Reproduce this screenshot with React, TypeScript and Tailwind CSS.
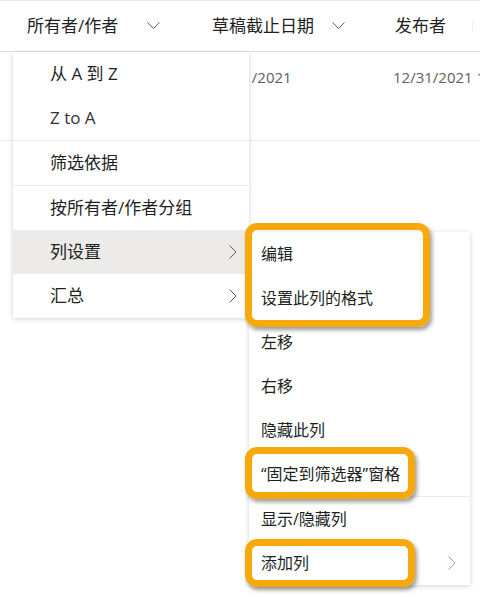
import React from 'react';

const font = "font-['Open_Sans','Noto_Sans_CJK_SC',sans-serif]";

const ChevronDown = () => (
  <svg width="13" height="8" viewBox="0 0 13 8" className="shrink-0">
    <polyline points="0.5,0.5 6.5,6.5 12.5,0.5" fill="none" stroke="#605e5c" strokeWidth="1" />
  </svg>
);

const ChevronRight = ({ color = '#605e5c' }: { color?: string }) => (
  <svg width="8" height="14" viewBox="0 0 8 14" className="shrink-0">
    <polyline points="0.5,0.5 7,7 0.5,13.5" fill="none" stroke={color} strokeWidth="1" />
  </svg>
);

type Item = { label: string; sub?: boolean; active?: boolean; divider?: boolean };

const columnMenu: Item[] = [
  { label: '从 A 到 Z' },
  { label: 'Z to A', divider: true },
  { label: '筛选依据', divider: true },
  { label: '按所有者/作者分组' },
  { label: '列设置', sub: true, active: true },
  { label: '汇总', sub: true },
];

const settingsMenu: Item[] = [
  { label: '编辑' },
  { label: '设置此列的格式' },
  { label: '左移' },
  { label: '右移' },
  { label: '隐藏此列' },
  { label: '“固定到筛选器”窗格', divider: true },
  { label: '显示/隐藏列' },
  { label: '添加列', sub: true },
];

const Callout = ({ className }: { className: string }) => (
  <div
    className={`absolute rounded-[12px] border-[7px] border-[#f7a90b] shadow-[2px_3px_4px_rgba(0,0,0,0.4)] ${className}`}
  />
);

export default function App() {
  return (
    <div className={`relative w-[480px] h-[597px] overflow-hidden bg-white text-[#201f1e] ${font}`}>
      {/* list header */}
      <div className="flex h-[52px] items-center border-t border-b border-t-[#edebe9] border-b-[#e1dfdd] text-[17px]">
        <div className="flex w-[185px] items-center pl-[27px] pr-[25px]">
          <span>所有者/作者</span>
          <span className="ml-auto">
            <ChevronDown />
          </span>
        </div>
        <div className="flex w-[183px] items-center gap-[18px] pl-[27px]">
          <span>草稿截止日期</span>
          <ChevronDown />
        </div>
        <div className="flex flex-1 items-center pl-[27px]">
          <span>发布者</span>
          <span className="ml-auto mr-[7px] h-[10px] w-px bg-[#edebe9]" />
        </div>
      </div>

      {/* first row (owner cell sits under the open menu) */}
      <div className="flex h-[89px] border-b border-[#edebe9] pt-[15px] text-[15px] leading-[20px] text-[#605e5c] whitespace-nowrap">
        <div className="w-[185px]" />
        <div className="w-[181px] pl-[27px]">12/31/2021</div>
        <div className="flex-1 overflow-hidden pl-[27px]">12/31/2021 1</div>
      </div>

      {/* column header menu */}
      <div className="absolute left-[13px] top-[52px] w-[236px] bg-white shadow-[0_1px_5px_rgba(0,0,0,0.18)] text-[17px]">
        {columnMenu.map((item) => (
          <div key={item.label}>
            <div
              className={`flex h-[44px] items-center pl-[37px] pr-[12px] ${item.active ? 'bg-[#edebe9]' : ''} ${item.label === 'Z to A' ? 'text-[#323130]' : ''}`}
            >
              <span>{item.label}</span>
              {item.sub && (
                <span className="ml-auto">
                  <ChevronRight />
                </span>
              )}
            </div>
            {item.divider && <div className="h-px bg-[#edebe9]" />}
          </div>
        ))}
      </div>

      {/* column settings submenu */}
      <div className="absolute left-[249px] top-[232px] w-[221px] bg-white shadow-[0_1px_5px_rgba(0,0,0,0.18)] text-[16px]">
        {settingsMenu.map((item) => (
          <div key={item.label}>
            <div className="flex h-[44px] items-center pl-[12px] pr-[14px]">
              <span>{item.label}</span>
              {item.sub && (
                <span className="ml-auto">
                  <ChevronRight color="#a19f9d" />
                </span>
              )}
            </div>
            {item.divider && <div className="h-px bg-[#edebe9]" />}
          </div>
        ))}
      </div>

      <Callout className="left-[245px] top-[223px] w-[185px] h-[104px]" />
      <Callout className="left-[245px] top-[447px] w-[170px] h-[52px]" />
      <Callout className="left-[245px] top-[539px] w-[170px] h-[48px]" />
    </div>
  );
}
